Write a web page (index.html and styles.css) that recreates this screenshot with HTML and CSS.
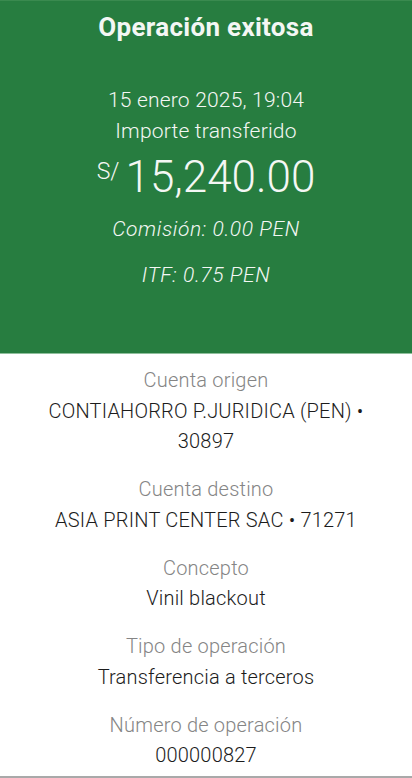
FILE: index.html
```html
<!DOCTYPE html>
<html lang="es">
<head>
    <meta charset="UTF-8">
    <meta name="viewport" content="width=device-width, initial-scale=1.0">
    <title>Operación exitosa</title>
    <link rel="stylesheet" href="styles.css">
</head>
<body>
    <div class="receipt">
        <div class="summary">
            <h1>Operación exitosa</h1>
            <div class="date">15 enero 2025, 19:04</div>
            <div class="caption">Importe transferido</div>
            <div class="amount"><span class="currency">S/</span>15,240.00</div>
            <div class="fee">Comisión: 0.00 PEN</div>
            <div class="fee">ITF: 0.75 PEN</div>
        </div>
        <div class="details">
            <div class="field">
                <div class="label">Cuenta origen</div>
                <div class="value">CONTIAHORRO P.JURIDICA (PEN) •<br>30897</div>
            </div>
            <div class="field">
                <div class="label">Cuenta destino</div>
                <div class="value">ASIA PRINT CENTER SAC • 71271</div>
            </div>
            <div class="field">
                <div class="label">Concepto</div>
                <div class="value">Vinil blackout</div>
            </div>
            <div class="field">
                <div class="label">Tipo de operación</div>
                <div class="value">Transferencia a terceros</div>
            </div>
            <div class="field">
                <div class="label">Número de operación</div>
                <div class="value">000000827</div>
            </div>
        </div>
    </div>
</body>
</html>
```

FILE: styles.css
```css
body {
    font-family: 'Roboto', sans-serif;
    background-color: #fff;
    margin: 0;
    padding: 0;
}
.receipt {
    height: 778px;
    display: flex;
    flex-direction: column;
    border-bottom: 2px solid #a9a9a9;
    box-sizing: border-box;
}
.summary {
    background-color: #277d40;
    border-top: 1px solid #3a8a4f;
    border-bottom: 1px solid #8fbf9c;
    color: #f4f7f4;
    text-align: center;
    padding: 11px 0 63px;
}
h1 {
    font-size: 26px;
    font-weight: 700;
    letter-spacing: 0.3px;
    line-height: 30px;
    margin: 0 0 43px;
}
.date, .caption {
    font-size: 21px;
    font-weight: 300;
    letter-spacing: 0.2px;
    line-height: 31px;
}
.amount {
    font-size: 44px;
    font-weight: 300;
    line-height: 50px;
    margin-top: 5px;
}
.currency {
    font-size: 23px;
    line-height: 0;
    vertical-align: 13px;
    margin-right: 6px;
}
.fee {
    font-size: 21px;
    font-weight: 300;
    font-style: italic;
    letter-spacing: 0.6px;
    line-height: 30px;
    margin-top: 12px;
}
.fee + .fee {
    margin-top: 16px;
}
.details {
    text-align: center;
    padding-top: 11px;
}
.field {
    margin-bottom: 17.5px;
}
.label {
    color: #858585;
    font-size: 20px;
    font-weight: 300;
    letter-spacing: 0.2px;
    line-height: 30.5px;
}
.value {
    color: #1c1c1c;
    font-size: 20px;
    font-weight: 300;
    letter-spacing: 0.2px;
    line-height: 30.5px;
}
```
